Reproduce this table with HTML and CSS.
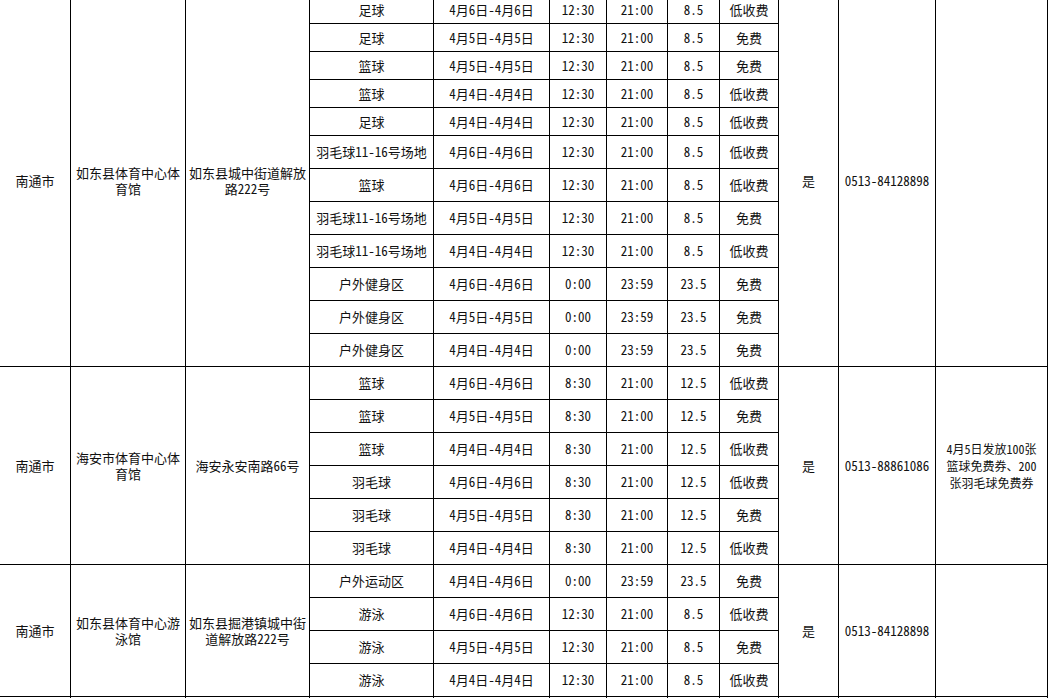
FILE: index.html
```html
<!DOCTYPE html>
<html lang="zh-CN">
<head>
<meta charset="utf-8">
<title>南通市体育场馆开放表</title>
<link rel="stylesheet" href="styles.css">
</head>
<body>
<table class="sheet">
  <colgroup>
    <col class="c-city"><col class="c-venue"><col class="c-addr"><col class="c-item"><col class="c-date">
    <col class="c-start"><col class="c-end"><col class="c-hours"><col class="c-fee"><col class="c-yes">
    <col class="c-phone"><col class="c-note">
  </colgroup>
  <tbody>
    <tr class="r28">
      <td rowspan="12">南通市</td>
      <td rowspan="12">如东县体育中心体育馆</td>
      <td rowspan="12">如东县城中街道解放路222号</td>
      <td>足球</td><td>4月6日-4月6日</td><td>12:30</td><td>21:00</td><td>8.5</td><td>低收费</td>
      <td rowspan="12">是</td>
      <td rowspan="12">0513-84128898</td>
      <td rowspan="12"></td>
    </tr>
    <tr class="r28"><td>足球</td><td>4月5日-4月5日</td><td>12:30</td><td>21:00</td><td>8.5</td><td>免费</td></tr>
    <tr class="r28"><td>篮球</td><td>4月5日-4月5日</td><td>12:30</td><td>21:00</td><td>8.5</td><td>免费</td></tr>
    <tr class="r28"><td>篮球</td><td>4月4日-4月4日</td><td>12:30</td><td>21:00</td><td>8.5</td><td>低收费</td></tr>
    <tr class="r28"><td>足球</td><td>4月4日-4月4日</td><td>12:30</td><td>21:00</td><td>8.5</td><td>低收费</td></tr>
    <tr class="r33"><td>羽毛球11-16号场地</td><td>4月6日-4月6日</td><td>12:30</td><td>21:00</td><td>8.5</td><td>低收费</td></tr>
    <tr class="r33"><td>篮球</td><td>4月6日-4月6日</td><td>12:30</td><td>21:00</td><td>8.5</td><td>低收费</td></tr>
    <tr class="r33"><td>羽毛球11-16号场地</td><td>4月5日-4月5日</td><td>12:30</td><td>21:00</td><td>8.5</td><td>免费</td></tr>
    <tr class="r33"><td>羽毛球11-16号场地</td><td>4月4日-4月4日</td><td>12:30</td><td>21:00</td><td>8.5</td><td>低收费</td></tr>
    <tr class="r33"><td>户外健身区</td><td>4月6日-4月6日</td><td>0:00</td><td>23:59</td><td>23.5</td><td>免费</td></tr>
    <tr class="r33"><td>户外健身区</td><td>4月5日-4月5日</td><td>0:00</td><td>23:59</td><td>23.5</td><td>免费</td></tr>
    <tr class="r33"><td>户外健身区</td><td>4月4日-4月4日</td><td>0:00</td><td>23:59</td><td>23.5</td><td>免费</td></tr>

    <tr class="r33">
      <td rowspan="6">南通市</td>
      <td rowspan="6">海安市体育中心体育馆</td>
      <td rowspan="6">海安永安南路66号</td>
      <td>篮球</td><td>4月6日-4月6日</td><td>8:30</td><td>21:00</td><td>12.5</td><td>低收费</td>
      <td rowspan="6">是</td>
      <td rowspan="6">0513-88861086</td>
      <td rowspan="6" class="note">4月5日发放100张<br>篮球免费券、200<br>张羽毛球免费券</td>
    </tr>
    <tr class="r33"><td>篮球</td><td>4月5日-4月5日</td><td>8:30</td><td>21:00</td><td>12.5</td><td>免费</td></tr>
    <tr class="r33"><td>篮球</td><td>4月4日-4月4日</td><td>8:30</td><td>21:00</td><td>12.5</td><td>低收费</td></tr>
    <tr class="r33"><td>羽毛球</td><td>4月6日-4月6日</td><td>8:30</td><td>21:00</td><td>12.5</td><td>低收费</td></tr>
    <tr class="r33"><td>羽毛球</td><td>4月5日-4月5日</td><td>8:30</td><td>21:00</td><td>12.5</td><td>免费</td></tr>
    <tr class="r33"><td>羽毛球</td><td>4月4日-4月4日</td><td>8:30</td><td>21:00</td><td>12.5</td><td>低收费</td></tr>

    <tr class="r33">
      <td rowspan="4">南通市</td>
      <td rowspan="4">如东县体育中心游泳馆</td>
      <td rowspan="4">如东县掘港镇城中街道解放路222号</td>
      <td>户外运动区</td><td>4月4日-4月6日</td><td>0:00</td><td>23:59</td><td>23.5</td><td>免费</td>
      <td rowspan="4">是</td>
      <td rowspan="4">0513-84128898</td>
      <td rowspan="4"></td>
    </tr>
    <tr class="r33"><td>游泳</td><td>4月6日-4月6日</td><td>12:30</td><td>21:00</td><td>8.5</td><td>低收费</td></tr>
    <tr class="r33"><td>游泳</td><td>4月5日-4月5日</td><td>12:30</td><td>21:00</td><td>8.5</td><td>免费</td></tr>
    <tr class="r33"><td>游泳</td><td>4月4日-4月4日</td><td>12:30</td><td>21:00</td><td>8.5</td><td>低收费</td></tr>

    <tr class="r33">
      <td></td><td></td><td></td><td></td><td></td><td></td><td></td><td></td><td></td><td></td><td></td><td></td>
    </tr>
  </tbody>
</table>
</body>
</html>
```
FILE: styles.css
```css
html, body {
  margin: 0;
  padding: 0;
  background: #ffffff;
  overflow: hidden;
}

.sheet {
  border-collapse: collapse;
  table-layout: fixed;
  width: 1049px;
  margin: -5px 0 0 -1px;
  font-family: "Noto Sans Mono CJK SC", "Noto Sans CJK SC", "DejaVu Sans Mono", monospace;
  font-size: 13px;
  font-weight: 300;
  line-height: 16px;
  color: #111111;
}

.sheet td {
  border: 1px solid #000000;
  padding: 0 2px;
  text-align: center;
  vertical-align: middle;
  overflow: hidden;
}

.c-city  { width: 71px; }
.c-venue { width: 115px; }
.c-addr  { width: 124px; }
.c-item  { width: 124px; }
.c-date  { width: 116px; }
.c-start { width: 57px; }
.c-end   { width: 61px; }
.c-hours { width: 52px; }
.c-fee   { width: 59px; }
.c-yes   { width: 60px; }
.c-phone { width: 97px; }
.c-note  { width: 112px; }

.r28 { height: 28px; }
.r33 { height: 33px; }

.sheet td.note {
  font-size: 12px;
  line-height: 17px;
}
```
